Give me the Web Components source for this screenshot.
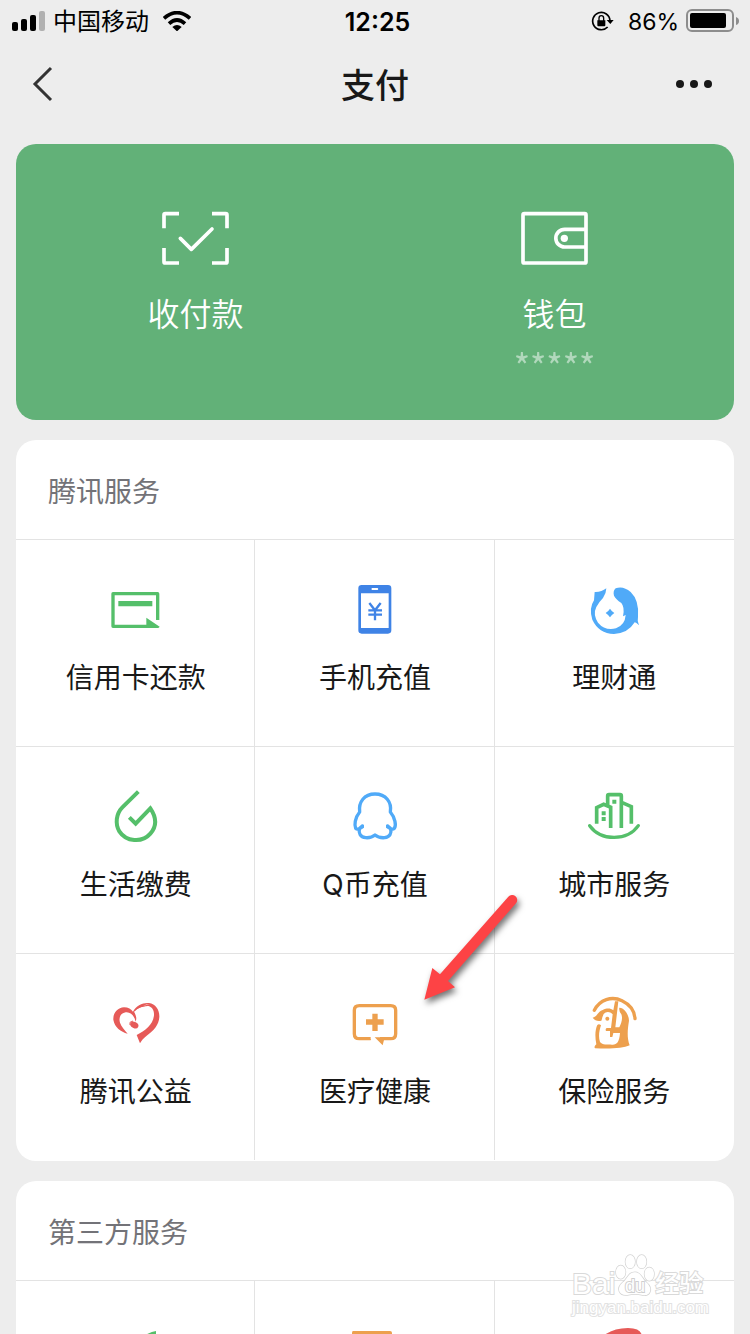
<!DOCTYPE html>
<html lang="zh-CN">
<head>
<meta charset="utf-8">
<meta name="viewport" content="width=device-width, initial-scale=1">
<title>支付</title>
<style>
  body {
    margin: 0;
    height: 100vh;
    overflow: hidden;
    background: #ededed;
    color: #181818;
    font-family: Inter, "Noto Sans CJK SC", sans-serif;
  }
</style>
</head>
<body>
<pay-page>
  <status-bar slot="top" carrier="中国移动" time="12:25" battery="86%"></status-bar>
  <nav-bar slot="top">支付</nav-bar>

  <wallet-card>
    <wallet-entry icon="scan">收付款</wallet-entry>
    <wallet-entry icon="wallet">钱包<span slot="note">*****</span></wallet-entry>
  </wallet-card>

  <service-section heading="腾讯服务">
    <service-item icon="card">信用卡还款</service-item>
    <service-item icon="phone">手机充值</service-item>
    <service-item icon="fish">理财通</service-item>
    <service-item icon="drop">生活缴费</service-item>
    <service-item icon="penguin">Q币充值</service-item>
    <service-item icon="city">城市服务</service-item>
    <service-item icon="heart">腾讯公益</service-item>
    <service-item icon="health">医疗健康</service-item>
    <service-item icon="insurance">保险服务</service-item>
    <pointer-arrow slot="overlay"></pointer-arrow>
  </service-section>

  <service-section heading="第三方服务">
    <service-item icon="travel"></service-item>
    <service-item icon="ticket"></service-item>
    <service-item icon="ride"></service-item>
  </service-section>

  <water-mark slot="overlay"></water-mark>
</pay-page>

<script>
const ICONS = {
  scan: {
    box: '90 54 216 180',
    art: `<g fill="none" stroke="#fff" stroke-width="11">
      <path d="M147 71H106Q102 71 102 75V115M246 71H287Q291 71 291 75V115M147 219H106Q102 219 102 215V174M246 219H287Q291 219 291 215V174"/>
      <path d="M151 145L184 178L246 117" stroke-linejoin="round" stroke-linecap="round"/></g>`
  },
  wallet: {
    box: '87 54 216 180',
    art: `<g fill="none" stroke="#fff" stroke-width="11">
      <rect x="99" y="71" width="189" height="148" rx="4"/>
      <path d="M288 118H224A26 26 0 0 0 224 171H288"/></g>
      <circle cx="223" cy="145" r="11" fill="#fff"/>`
  },
  card: {
    box: '47 30 180 180',
    art: `<path fill="none" stroke="#55bf6a" stroke-width="10" stroke-linejoin="round" d="M202 150V71H68V169H190"/>
      <path fill="#55bf6a" d="M84 93H186V109H84ZM168 143L208 170Q206 174 202 174H168Z"/>`
  },
  phone: {
    box: '45 30 180 180',
    art: `<path fill="#3f83e6" fill-rule="evenodd" d="M95 45H174Q184 45 184 55V181Q184 191 174 191H95Q85 191 85 181V55Q85 45 95 45ZM93 70V174H176V70ZM126 54Q122 57 126 60H143Q147 57 143 54Z"/>
      <path fill="none" stroke="#3f83e6" stroke-width="7" d="M118 99L135 121L152 99M135 119V151M115 121H156M115 134H156"/>`
  },
  fish: {
    box: '762 30 180 180',
    art: `<path fill="#50aaf8" d="M829 55Q814 67 794 66L792 91Q776 115 787 149Q806 190 852 192Q894 190 914 157Q918 157 927 166Q921 151 924 140Q928 91 902 66Q879 46 857 55Q848 64 852 77Q857 87 874 99Q885 112 879 139L887 135Q885 165 858 175Q825 183 804 158Q788 133 799 111Q806 97 819 84Q829 69 829 55Z"/>
      <path fill="#50aaf8" d="M840 116Q845 124 853 129Q845 134 840 142Q835 134 827 129Q835 124 840 116Z"/>`
  },
  drop: {
    box: '47 21 180 180',
    art: `<path fill="none" stroke="#55bf6a" stroke-width="12" d="M144 35L96 82C77 101 74 133 87 154C107 185 155 190 180 161C201 137 197 110 180 85L136 131L117 112"/>`
  },
  penguin: {
    box: '765 21 180 180',
    art: `<path fill="none" stroke="#50aaf8" stroke-width="10" stroke-linejoin="round" stroke-linecap="round" d="M817 138L809 145C806 147 801 149 797 145C793 136 794 114 809 96C805 66 823 42 855 42C887 42 906 66 901 96C916 114 919 136 913 145C909 149 904 147 901 145L893 138M808 147C806 159 810 171 827 173C840 174 848 171 855 165C862 171 870 174 884 173C900 171 905 159 902 147"/>
      <path fill="none" stroke="#50aaf8" stroke-width="8" d="M818 134V141L809 147M892 134V141L901 147"/>`
  },
  city: {
    box: '42 21 180 180',
    art: `<path fill="none" stroke="#55bf6a" stroke-width="11" d="M154 144V48Q154 44 150 44H117Q113 44 113 48V77M80 131V83L101 73L122 82V144M155 67L184 80V131"/>
      <path fill="none" stroke="#55bf6a" stroke-width="10" stroke-linecap="round" d="M59 137C93 184 172 184 205 137"/>
      <path fill="#55bf6a" d="M127 59H139V71H127ZM95 94H107V106H95ZM95 111H107V123H95Z"/>`
  },
  heart: {
    box: '47 27 180 180',
    art: `<path fill="#e65a58" d="M112 146C91 140 73 127 69 104C68 84 82 68 101 67C114 67 123 73 128 80C137 63 155 53 176 54C196 57 208 75 207 96C206 119 190 138 169 152C159 160 153 167 149 175L139 150C165 137 188 119 191 91C192 76 186 66 172 62C154 63 139 71 131 80C137 90 140 100 136 110C132 92 120 80 106 82C92 84 84 97 89 113C93 125 104 136 112 146Z"/>
      <path fill="#e65a58" d="M131 80C139 66 156 55 176 55L172 63Q148 64 131 80Z"/>
      <path fill="#fff" d="M158 62Q168 57 179 57Q167 60 158 62Z"/>
      <ellipse cx="132" cy="120" rx="13" ry="9" transform="rotate(28 132 120)" fill="#e65a58"/>
      <path fill="none" stroke="#e65a58" stroke-width="3" d="M119 120V112L128 108"/>`
  },
  health: {
    box: '45 342 180 180',
    art: `<path fill="none" stroke="#eda04e" stroke-width="10" d="M122 476H88Q73 476 73 461V391Q73 377 88 377H182Q197 377 197 391V461Q197 476 182 476H150"/>
      <path fill="#eda04e" d="M127 401H143V418H161V434H143V453H127V434H108V418H127ZM134 472H164L158 496ZM112 471L124 480H108Z"/>`
  },
  insurance: {
    box: '42 27 180 180',
    art: `<path fill="none" stroke="#eda04e" stroke-width="10" stroke-linecap="round" d="M73 76C89 44 125 32 156 47C181 59 194 79 195 101"/>
      <path fill="#eda04e" d="M68 98C83 94 82 81 98 75C111 69 121 69 130 76L135 49H145L136 127H148C154 115 159 101 154 88Q146 78 148 68C160 67 176 84 177 107C173 133 170 157 179 181C159 190 125 192 75 190C72 187 74 182 79 178C74 153 76 132 82 120Q87 115 93 121C87 139 85 157 90 171C98 181 111 178 126 179C140 180 148 172 150 144H130L127 156H120V138H108Q105 133 110 129H123L128 88C119 78 108 79 101 87C96 97 96 104 94 107C83 109 75 107 68 98Z"/>
      <circle cx="112" cy="101" r="6" fill="#eda04e"/>`
  },
  travel: {
    box: '0 0 60 60',
    art: `<path fill="#55bf6a" d="M50 10Q51 38 22 50Q10 50 10 42Q12 24 33 18Q43 11 50 10Z"/>`
  },
  ticket: {
    box: '0 0 60 60',
    art: `<path fill="#eda04e" d="M8 10H45Q47 10 47 12V50H7V12Q7 10 8 10Z"/>`
  },
  ride: {
    box: '0 0 60 60',
    art: `<path fill="#e65a58" d="M19 15Q29 7 44 7Q58 7 58 16L50 34L42 50H33L42 19Q43 12 36 13Q24 15 16 22Z"/>`
  }
};

const drawIcon = (name) => {
  const icon = ICONS[name];
  return icon ? `<svg viewBox="${icon.box}" aria-hidden="true">${icon.art}</svg>` : '';
};

class PayPage extends HTMLElement {
  constructor() {
    super();
    this.attachShadow({ mode: 'open' });
  }

  connectedCallback() {
    this.shadowRoot.innerHTML = `
      <style>
        :host {
          display: block;
          position: relative;
          height: 100%;
          overflow: hidden;
        }
        main {
          display: flex;
          flex-direction: column;
          gap: 20px;
          padding: 16px;
        }
      </style>
      <header><slot name="top"></slot></header>
      <main><slot></slot></main>
      <slot name="overlay"></slot>
    `;
  }
}

class StatusBar extends HTMLElement {
  constructor() {
    super();
    this.attachShadow({ mode: 'open' });
  }

  connectedCallback() {
    this.shadowRoot.innerHTML = `
      <style>
        :host {
          display: grid;
          grid-template-columns: 1fr auto 1fr;
          align-items: center;
          height: 40px;
          padding: 0 11px 0 12px;
          color: #000;
          font-size: 24px;
          line-height: 40px;
        }
        div {
          display: flex;
          align-items: center;
          gap: 8px;
        }
        .right {
          justify-content: flex-end;
          gap: 7px;
        }
        .lock { margin-right: 6px; }
        .wifi { margin-left: 6px; }
        span, time { padding-top: 2px; }
        time {
          padding-left: 4px;
          font-size: 25px;
          font-weight: 600;
        }
        .battery { font-size: 23px; }
        svg { display: block; }
      </style>
      <div>
        <svg width="33" height="20" viewBox="0 0 33 20" aria-hidden="true">
          <rect y="11" width="6" height="9" rx="2"/>
          <rect x="9" y="8" width="6" height="12" rx="2"/>
          <rect x="18" y="4" width="6" height="16" rx="2"/>
          <rect x="27" width="6" height="20" rx="2" fill="#b1b1b1"/>
        </svg>
        <span>${this.getAttribute('carrier')}</span>
        <svg class="wifi" width="28" height="20" viewBox="0 0 84 60" aria-hidden="true">
          <path fill="none" stroke="#000" stroke-width="11" d="M3 22Q42-12 81 22M18 38Q42 16 66 38"/>
          <path d="M28 48Q42 36 56 48L42 61Z"/>
        </svg>
      </div>
      <time>${this.getAttribute('time')}</time>
      <div class="right">
        <svg class="lock" width="24" height="20" viewBox="0 0 72 60" aria-hidden="true">
          <path fill="none" stroke="#000" stroke-width="5" d="M50 48A26 26 0 1 1 57 29"/>
          <path d="M47 27H68L58 39ZM19 28H43V43Q43 46 40 46H22Q19 46 19 43Z"/>
          <path fill="none" stroke="#000" stroke-width="4" d="M24 30V22Q24 14 31 14T38 22V30"/>
        </svg>
        <span class="battery">${this.getAttribute('battery')}</span>
        <svg width="53" height="24" viewBox="0 0 53 24" aria-hidden="true">
          <rect x="1" y="1" width="46" height="21" rx="5" fill="none" stroke="#8d8d8d" stroke-width="2"/>
          <rect x="4" y="4" width="36" height="15" rx="2"/>
          <path d="M50 8Q53 9 53 12T50 16Z" fill="#8d8d8d"/>
        </svg>
      </div>
    `;
  }
}

class NavBar extends HTMLElement {
  constructor() {
    super();
    this.attachShadow({ mode: 'open' });
  }

  connectedCallback() {
    this.shadowRoot.innerHTML = `
      <style>
        :host {
          display: grid;
          grid-template-columns: 1fr auto 1fr;
          align-items: center;
          height: 88px;
          padding: 0 24px;
        }
        h1 {
          margin: 0;
          padding-top: 4px;
          font-size: 34px;
          font-weight: 500;
          line-height: 48px;
        }
        button {
          display: block;
          padding: 0;
          border: 0;
          background: none;
        }
        .more { justify-self: end; }
        svg { display: block; }
      </style>
      <button class="back" type="button" aria-label="返回">
        <svg width="40" height="40" viewBox="0 0 40 40">
          <path d="M27 4L11 20L27 36" fill="none" stroke="#333" stroke-width="3"/>
        </svg>
      </button>
      <h1><slot></slot></h1>
      <button class="more" type="button" aria-label="更多">
        <svg width="64" height="40" viewBox="0 0 64 40" fill="#181818">
          <circle cx="18" cy="20" r="4"/><circle cx="32" cy="20" r="4"/><circle cx="46" cy="20" r="4"/>
        </svg>
      </button>
    `;
  }
}

class WalletCard extends HTMLElement {
  constructor() {
    super();
    this.attachShadow({ mode: 'open' });
  }

  connectedCallback() {
    this.shadowRoot.innerHTML = `
      <style>
        :host {
          display: grid;
          grid-template-columns: 1fr 1fr;
          min-height: 276px;
          border-radius: 20px;
          background: #62b178;
          color: #fff;
        }
      </style>
      <slot></slot>
    `;
  }
}

class WalletEntry extends HTMLElement {
  constructor() {
    super();
    this.attachShadow({ mode: 'open' });
  }

  connectedCallback() {
    this.shadowRoot.innerHTML = `
      <style>
        :host { display: block; }
        a {
          display: flex;
          flex-direction: column;
          align-items: center;
          padding-top: 64px;
          color: inherit;
          text-decoration: none;
        }
        svg {
          width: 72px;
          height: 60px;
        }
        .label {
          margin-top: 23px;
          font-size: 32px;
          font-weight: 350;
          line-height: 48px;
        }
        .note {
          margin-top: 6px;
          font-family: "Noto Sans CJK SC", sans-serif;
          font-size: 35px;
          line-height: 40px;
          opacity: 0.5;
        }
      </style>
      <a href="#${this.getAttribute('icon')}">
        ${drawIcon(this.getAttribute('icon'))}
        <span class="label"><slot></slot></span>
        <span class="note"><slot name="note"></slot></span>
      </a>
    `;
  }
}

class ServiceSection extends HTMLElement {
  constructor() {
    super();
    this.attachShadow({ mode: 'open' });
  }

  connectedCallback() {
    this.shadowRoot.innerHTML = `
      <style>
        :host {
          display: block;
          position: relative;
          padding-bottom: 1px;
          border-radius: 20px;
          background: #fff;
        }
        h2 {
          margin: 0;
          padding: 32px 32px 27px;
          color: #737378;
          font-size: 28px;
          font-weight: 400;
          line-height: 40px;
        }
        .grid {
          display: grid;
          grid-template-columns: repeat(3, 1fr);
          overflow: hidden;
        }
        ::slotted(service-item) {
          border-top: 1px solid #e3e3e3;
          border-left: 1px solid #e3e3e3;
          margin-left: -1px;
        }
      </style>
      <h2>${this.getAttribute('heading')}</h2>
      <div class="grid"><slot></slot></div>
      <slot name="overlay"></slot>
    `;
  }
}

class ServiceItem extends HTMLElement {
  constructor() {
    super();
    this.attachShadow({ mode: 'open' });
  }

  connectedCallback() {
    this.shadowRoot.innerHTML = `
      <style>
        :host { display: block; }
        a {
          display: flex;
          flex-direction: column;
          align-items: center;
          gap: 18px;
          padding: 40px 0 48px;
          color: inherit;
          text-decoration: none;
        }
        svg {
          width: 60px;
          height: 60px;
        }
        span {
          min-height: 40px;
          font-size: 28px;
          line-height: 40px;
        }
      </style>
      <a href="#${this.getAttribute('icon')}">
        ${drawIcon(this.getAttribute('icon'))}
        <span><slot></slot></span>
      </a>
    `;
  }
}

// Red arrow laid over the grid, pointing at the health entry
class PointerArrow extends HTMLElement {
  constructor() {
    super();
    this.attachShadow({ mode: 'open' });
  }

  connectedCallback() {
    this.shadowRoot.innerHTML = `
      <style>
        :host {
          display: block;
          position: absolute;
          left: calc(50% + 40px);
          top: 445px;
          pointer-events: none;
        }
        svg {
          display: block;
          filter: drop-shadow(2px 4px 3px rgba(0, 0, 0, 0.55));
        }
      </style>
      <svg width="115" height="125" viewBox="255 15 345 375" aria-hidden="true">
        <path fill="#fd4345" d="M283 359L307 264L330 283L535 50A15 15 0 0 1 558 70L354 303L375 322Z"/>
      </svg>
    `;
  }
}

class WaterMark extends HTMLElement {
  constructor() {
    super();
    this.attachShadow({ mode: 'open' });
  }

  connectedCallback() {
    this.shadowRoot.innerHTML = `
      <style>
        :host {
          display: block;
          position: absolute;
          right: 41px;
          bottom: 16px;
          color: #fff;
          font-family: "Liberation Sans", "Noto Sans CJK SC", sans-serif;
          pointer-events: none;
          -webkit-text-stroke: 2px #d9d9d9;
          paint-order: stroke fill;
        }
        .logo {
          display: flex;
          align-items: flex-end;
          height: 46px;
          line-height: 28px;
        }
        .bai {
          font-size: 30px;
        }
        .cn {
          font-size: 24px;
          font-weight: 500;
        }
        .url {
          font-size: 17px;
          line-height: 20px;
          -webkit-text-stroke-color: #e2e2e2;
        }
        svg { display: block; }
      </style>
      <div class="logo">
        <span class="bai">Bai</span>
        <svg width="40" height="46" viewBox="-1 0 42 46" aria-hidden="true">
          <g fill="#fff" stroke="#d4d4d4" stroke-width="1.5">
            <ellipse cx="5" cy="20" rx="5" ry="7"/>
            <ellipse cx="15" cy="9" rx="5" ry="7"/>
            <ellipse cx="27" cy="9" rx="5" ry="7"/>
            <ellipse cx="35" cy="22" rx="5" ry="7"/>
            <path d="M20 20C26 20 27 26 32 31C40 38 35 46 28 44Q20 42 12 44C3 45 0 37 7 31C13 26 13 20 20 20Z"/>
          </g>
          <text x="20" y="41" text-anchor="middle" font-size="19" fill="#fff" stroke="#cfcfcf" stroke-width="2">du</text>
        </svg>
        <span class="cn">经验</span>
      </div>
      <div class="url">jingyan.baidu.com</div>
    `;
  }
}

customElements.define('pay-page', PayPage);
customElements.define('status-bar', StatusBar);
customElements.define('nav-bar', NavBar);
customElements.define('wallet-card', WalletCard);
customElements.define('wallet-entry', WalletEntry);
customElements.define('service-section', ServiceSection);
customElements.define('service-item', ServiceItem);
customElements.define('pointer-arrow', PointerArrow);
customElements.define('water-mark', WaterMark);
</script>
</body>
</html>
